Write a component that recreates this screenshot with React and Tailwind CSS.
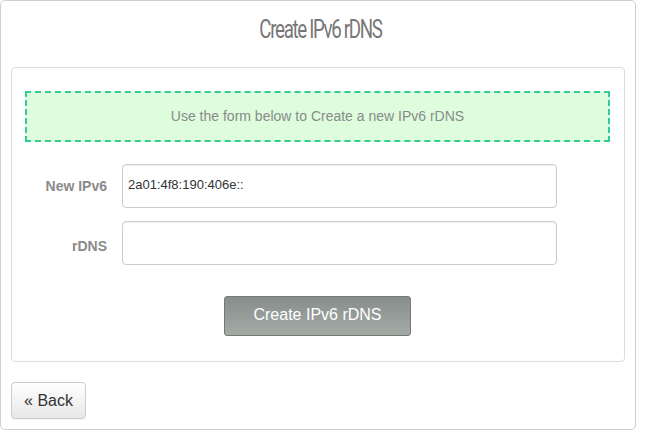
export default function App() {
  return (
    <div className="w-[648px] h-[436px] bg-white font-['Liberation_Sans',Arial,sans-serif]">
      <div className="w-[636px] h-[430px] border border-[#cfcfcf] rounded-[5px] flex flex-col">
        <div className="h-[66px] flex items-start justify-center pt-[14px]">
          <h1 className="inline-block text-[25px] leading-[30px] text-[#777] font-['Roboto',sans-serif] tracking-[-1.8px] scale-x-[0.75] ml-[4px]">
            Create IPv6 rDNS
          </h1>
        </div>
        <div className="mx-[10px] h-[295px] border border-[#dcdcdc] rounded-[4px] pl-[13px] pr-[14px] pt-[23px]">
          <div className="h-[51px] border-2 border-dashed border-[#33cc94] bg-[#ddfddd] flex items-center justify-center text-[14px] text-[#8a8a8a]">
            Use the form below to Create a new IPv6 rDNS
          </div>
          <div className="mt-[22px] flex flex-col gap-[13px]">
            <div className="flex items-center">
              <label className="w-[82px] text-right text-[14px] font-bold text-[#8a8a8a]">New IPv6</label>
              <input
                defaultValue="2a01:4f8:190:406e::"
                className="ml-[15px] w-[435px] h-[44px] border border-[#cccccc] rounded-[4px] px-[5px] text-[13px] text-[#333] outline-none shadow-[inset_0_1px_1px_rgba(0,0,0,0.06)] pb-[3px]"
              />
            </div>
            <div className="flex items-center">
              <label className="w-[82px] text-right text-[14px] font-bold text-[#8a8a8a] pt-[6px]">rDNS</label>
              <input className="ml-[15px] w-[435px] h-[44px] border border-[#cccccc] rounded-[4px] px-[5px] text-[13px] text-[#333] outline-none shadow-[inset_0_1px_1px_rgba(0,0,0,0.06)]" />
            </div>
          </div>
          <div className="mt-[31px] flex justify-center">
            <button className="w-[187px] h-[40px] rounded-[3px] border border-[#727a76] bg-gradient-to-b from-[#878e8b] to-[#a4aba7] text-white text-[16px] pb-[2px]">
              Create IPv6 rDNS
            </button>
          </div>
        </div>
        <div className="mt-[20px] ml-[10px]">
          <button className="w-[75px] h-[37px] rounded-[4px] border border-[#cccccc] bg-gradient-to-b from-white to-[#e8e8e8] text-[#333] text-[16px] shadow-[0_1px_1px_rgba(0,0,0,0.05)]">
            « Back
          </button>
        </div>
      </div>
    </div>
  );
}
